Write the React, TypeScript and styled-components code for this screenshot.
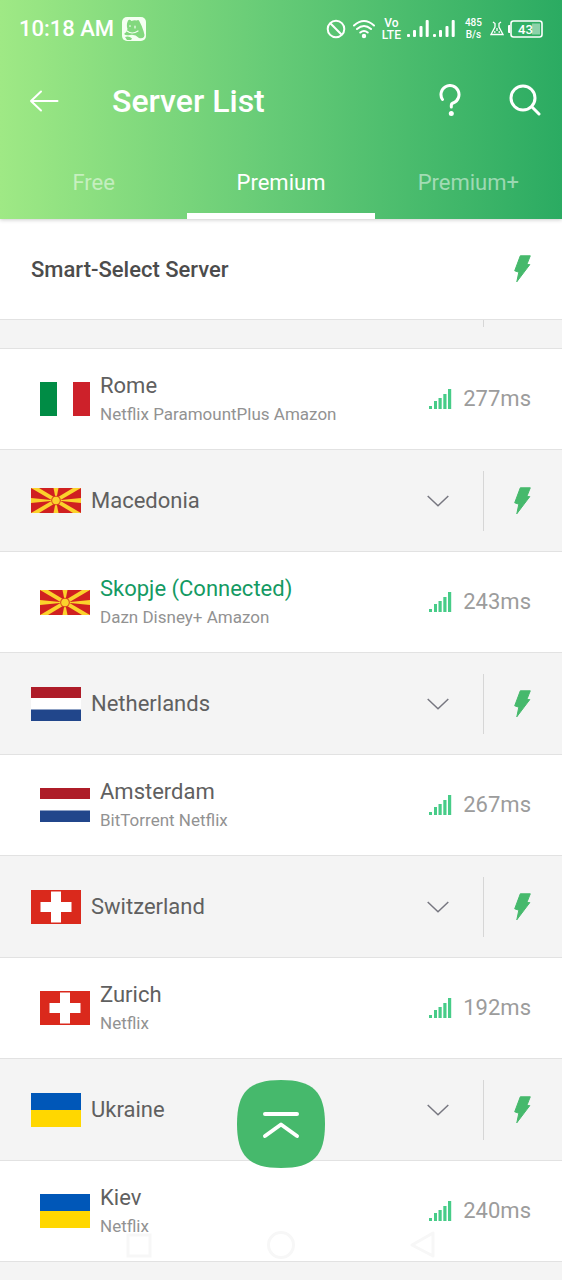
import React from "react";
import styled, { createGlobalStyle } from "styled-components";

const GlobalStyle = createGlobalStyle`
  * { box-sizing: border-box; }
  body { margin: 0; background: #f4f4f4; font-family: Roboto, "Liberation Sans", sans-serif; }
  button { border: 0; padding: 0; background: none; font: inherit; color: inherit; text-align: left; cursor: pointer; }
  svg { display: block; flex: none; }
`;

const Page = styled.div`
  min-height: 100vh;
  display: flex;
  flex-direction: column;
`;

const Header = styled.header`
  background: linear-gradient(90deg, #9fe985 0%, #64ca76 50%, #2bab62 100%);
  color: #fff;
  box-shadow: 0 1px 4px rgba(0, 0, 0, 0.2);
  position: relative;
`;

const StatusBar = styled.div`
  display: flex;
  align-items: center;
  justify-content: space-between;
  height: 57px;
  padding: 0 19px;
`;

const StatusGroup = styled.div<{ $gap: number }>`
  display: flex;
  align-items: center;
  gap: ${(p) => p.$gap}px;
`;

const Clock = styled.span`
  font-size: 22px;
  font-weight: 500;
  line-height: 28px;
`;

const Stacked = styled.span<{ $size: number }>`
  display: flex;
  flex-direction: column;
  align-items: center;
  font-size: ${(p) => p.$size}px;
  font-weight: 500;
  line-height: 12px;
`;

const TitleBar = styled.div`
  display: flex;
  align-items: center;
  height: 88px;
  padding: 0 21px 0 28px;
`;

const Title = styled.h1`
  flex: 1;
  margin: 0 0 0 52px;
  font-size: 32px;
  font-weight: 500;
  line-height: 40px;
`;

const IconButton = styled.button`
  display: flex;
  align-items: center;
  justify-content: center;
  width: 32px;
  height: 40px;
  & + & { margin-left: 42px; }
`;

const Tabs = styled.nav`
  display: flex;
  height: 74px;
`;

const Tab = styled.button<{ $active?: boolean }>`
  flex: 1;
  display: flex;
  align-items: center;
  justify-content: center;
  border-top: 8px solid transparent;
  border-bottom: 6px solid ${(p) => (p.$active ? "#fff" : "transparent")};
  font-size: 22px;
  line-height: 28px;
  color: ${(p) => (p.$active ? "#fff" : "rgba(255, 255, 255, 0.5)")};
`;

const SmartRow = styled.button`
  display: flex;
  align-items: center;
  justify-content: space-between;
  width: 100%;
  height: 101px;
  padding: 0 31px;
  background: #fff;
  border-bottom: 1px solid #e2e2e2;
  font-size: 22px;
  font-weight: 500;
  color: #4c4c4c;
`;

const ScrolledRow = styled.div`
  display: flex;
  justify-content: flex-end;
  height: 29px;
  padding-right: 78px;
  border-bottom: 1px solid #e2e2e2;
`;

const List = styled.ul`
  list-style: none;
  margin: 0;
  padding: 0;
`;

const CountryRow = styled.li`
  display: flex;
  align-items: center;
  height: 102px;
  padding-right: 31px;
  background: #f4f4f4;
  border-bottom: 1px solid #e2e2e2;
`;

const CountryToggle = styled.button`
  flex: 1;
  display: flex;
  align-items: center;
  gap: 10px;
  height: 100%;
  padding: 0 34px 0 31px;
`;

const CountryName = styled.span`
  flex: 1;
  font-size: 22px;
  line-height: 30px;
  color: #606060;
`;

const Divider = styled.span<{ $height: number }>`
  width: 1px;
  height: ${(p) => p.$height}px;
  background: #d6d6d6;
`;

const BoltButton = styled.button`
  padding-left: 30px;
`;

const CityItem = styled.li`
  height: 101px;
  background: #fff;
  border-bottom: 1px solid #e2e2e2;
`;

const CityButton = styled.button`
  display: flex;
  align-items: center;
  gap: 10px;
  width: 100%;
  height: 100%;
  padding: 0 31px 0 40px;
`;

const CityText = styled.span`
  flex: 1;
  display: flex;
  flex-direction: column;
`;

const CityName = styled.span<{ $connected?: boolean }>`
  font-size: 22px;
  line-height: 30px;
  color: ${(p) => (p.$connected ? "#149a63" : "#606060")};
`;

const Services = styled.span`
  font-size: 17px;
  line-height: 26px;
  color: #929292;
`;

const Ping = styled.span`
  font-size: 22px;
  line-height: 30px;
  color: #9c9c9c;
`;

const TopButton = styled.button`
  position: fixed;
  left: 50%;
  bottom: 112px;
  transform: translateX(-50%);
`;

const NavBar = styled.div`
  position: fixed;
  left: 0;
  right: 0;
  bottom: 20px;
  display: flex;
  justify-content: center;
  gap: 114px;
  pointer-events: none;
`;

type Country = "italy" | "macedonia" | "netherlands" | "switzerland" | "ukraine";

const sunRays = [
  "M0 0H8L27 11.500L23 13.500Z", "M50 0H42L23 11.500L27 13.500Z",
  "M0 25H8L27 13.500L23 11.500Z", "M50 25H42L23 13.500L27 11.500Z",
  "M22.500 0H27.500L25 12.500Z", "M22.500 25H27.500L25 12.500Z",
  "M0 10V15L25 12.500Z", "M50 10V15L25 12.500Z",
];

function Flag({ country }: { country: Country }) {
  if (country === "macedonia") {
    return (
      <svg width="50" height="25" viewBox="0 0 50 25" aria-hidden="true">
        <path fill="#d02020" d="M0 0H50V25H0Z" />
        {sunRays.map((d) => <path key={d} d={d} fill="#fbd22c" />)}
        <circle cx="25" cy="12.500" r="4.800" fill="#d8401f" />
        <circle cx="25" cy="12.500" r="3.800" fill="#fbd22c" />
      </svg>
    );
  }
  return (
    <svg width="50" height="34" viewBox="0 0 50 34" aria-hidden="true">
      {country === "italy" && (
        <>
          <path fill="#fff" d="M0 0H50V34H0Z" />
          <path fill="#008c45" d="M0 0H17V34H0Z" />
          <path fill="#cd212a" d="M33 0H50V34H33Z" />
        </>
      )}
      {country === "netherlands" && (
        <>
          <path fill="#fff" d="M0 0H50V34H0Z" />
          <path fill="#ae1c28" d="M0 0H50V11H0Z" />
          <path fill="#21468b" d="M0 22.500H50V34H0Z" />
        </>
      )}
      {country === "switzerland" && (
        <>
          <path fill="#da291c" d="M0 0H50V34H0Z" />
          <path fill="#fff" d="M20 1.500H30V12H40.500V22H30V32.500H20V22H9.500V12H20Z" />
        </>
      )}
      {country === "ukraine" && (
        <>
          <path fill="#0057b8" d="M0 0H50V17H0Z" />
          <path fill="#ffd700" d="M0 17H50V34H0Z" />
        </>
      )}
    </svg>
  );
}

const Bolt = () => (
  <svg width="17" height="28" viewBox="0 0 17 28" aria-hidden="true">
    <path
      d="M6.300 0.800H16.300L12.800 9.600H15.800L2.800 26.800L4.800 17.200L0.700 15.800Z"
      fill="#46b96c" stroke="#46b96c" strokeWidth="1" strokeLinejoin="round"
    />
  </svg>
);

const Chevron = () => (
  <svg width="22" height="12" viewBox="0 0 22 12" fill="none" stroke="#777780" strokeWidth="1.500" aria-hidden="true">
    <path d="M0.700 1L11 10.700L21.300 1" />
  </svg>
);

const Signal = () => (
  <svg width="24" height="20" viewBox="0 0 24 20" fill="#47cc88" aria-hidden="true">
    <path d="M0 17H3V20H0ZM5 12H8V20H5ZM9.500 9H12.700V20H9.500ZM14.300 5H17.500V20H14.300ZM19 0H22.200V20H19Z" />
  </svg>
);

const CellBars = () => (
  <svg width="22" height="18" viewBox="0 0 22 18" fill="#fff" aria-hidden="true">
    <rect x="0" y="14" width="3" height="3" rx="1" />
    <rect x="6" y="10" width="3" height="7" rx="1" />
    <rect x="12.500" y="6" width="3" height="11" rx="1" />
    <rect x="18.700" y="0" width="3" height="17" rx="1" />
  </svg>
);

const Mascot = () => (
  <svg width="24" height="24" viewBox="0 0 24 24" aria-hidden="true">
    <rect width="24" height="24" rx="5" fill="#f4fff1" />
    <path fill="#82d87e" d="M6 3.500Q7.500 2 9.500 4Q12 3 14.500 3.500Q17 2 17.500 4.500Q20 9 21.500 14Q23 18 22 20Q20 22 17 21Q13 17 8 18Q4 19 2 17Q5 15 5.500 12Q4 8 6 3.500Z" />
    <path fill="none" stroke="#f4fff1" strokeWidth="1.200" strokeLinecap="round" d="M5 14Q10 18 16 14M8 8.500V9.500M13 9V11" />
    <path fill="#82d87e" d="M3 20Q7 18.500 10 21.500L9 23H5Z" />
  </svg>
);

const rows: { country: Country; label?: string; city: string; services: string; ping: number; connected?: boolean }[] = [
  { country: "italy", city: "Rome", services: "Netflix ParamountPlus Amazon", ping: 277 },
  { country: "macedonia", label: "Macedonia", city: "Skopje (Connected)", services: "Dazn Disney+ Amazon", ping: 243, connected: true },
  { country: "netherlands", label: "Netherlands", city: "Amsterdam", services: "BitTorrent Netflix", ping: 267 },
  { country: "switzerland", label: "Switzerland", city: "Zurich", services: "Netflix", ping: 192 },
  { country: "ukraine", label: "Ukraine", city: "Kiev", services: "Netflix", ping: 240 },
];

export default function App() {
  return (
    <Page>
      <GlobalStyle />
      <Header>
        <StatusBar>
          <StatusGroup $gap={8}>
            <Clock>10:18 AM</Clock>
            <Mascot />
          </StatusGroup>
          <StatusGroup $gap={10}>
            <StatusGroup $gap={6}>
              <svg width="20" height="20" viewBox="0 0 20 20" fill="none" stroke="#fff" strokeWidth="2" aria-hidden="true">
                <circle cx="10" cy="10" r="8.300" />
                <path d="M4.300 4.300L15.700 15.700" />
              </svg>
              <svg width="24" height="20" viewBox="0 0 24 20" fill="none" stroke="#fff" strokeWidth="2" strokeLinecap="round" aria-hidden="true">
                <path d="M2 6.500Q12 -2.500 22 6.500M5 10Q12 4 19 10M8.300 13.500Q12 10.500 15.700 13.500" />
                <circle cx="12" cy="17" r="1.200" fill="#fff" />
              </svg>
              <Stacked $size={12}><span>Vo</span><span>LTE</span></Stacked>
              <StatusGroup $gap={4}>
                <CellBars />
                <CellBars />
              </StatusGroup>
            </StatusGroup>
            <StatusGroup $gap={8}>
              <Stacked $size={10}><span>485</span><span>B/s</span></Stacked>
              <StatusGroup $gap={4}>
                <svg width="14" height="15" viewBox="0 0 14 15" fill="none" stroke="#fff" strokeWidth="1.300" aria-hidden="true">
                  <path d="M3 1L5 2.500V6L1 13.500H13L9 6V2.500L11 1M7 7V10M4 11H5.500M8.500 11H10" />
                </svg>
                <svg width="35" height="18" viewBox="0 0 35 18" aria-hidden="true">
                  <path fill="#fff" d="M0 6Q0 5 1 5H2V13H1Q0 13 0 12Z" />
                  <rect x="3" y="1" width="31" height="16" rx="2.500" fill="none" stroke="#fff" strokeWidth="1.600" />
                  <rect x="24" y="3.500" width="8" height="11" fill="#fff" opacity="0.450" />
                  <text x="17.500" y="13.500" textAnchor="middle" fill="#fff" fontSize="13" fontWeight="500">43</text>
                </svg>
              </StatusGroup>
            </StatusGroup>
          </StatusGroup>
        </StatusBar>
        <TitleBar>
          <IconButton aria-label="Back">
            <svg width="30" height="24" viewBox="0 0 30 24" fill="none" stroke="#fff" strokeWidth="2" strokeLinecap="round" strokeLinejoin="round" aria-hidden="true">
              <path d="M28.500 12H2M12 2.500L2 12L12 21.500" />
            </svg>
          </IconButton>
          <Title>Server List</Title>
          <IconButton aria-label="Help">
            <svg width="24" height="34" viewBox="0 0 24 34" fill="none" stroke="#fff" strokeWidth="3" strokeLinecap="round" strokeLinejoin="round" aria-hidden="true">
              <path d="M3.500 15.500A9 9 0 1 1 14.500 18.800Q12.300 19.500 12.300 21.500V23" />
              <circle cx="12.300" cy="29.500" r="2.500" fill="#fff" stroke="none" />
            </svg>
          </IconButton>
          <IconButton aria-label="Search">
            <svg width="32" height="34" viewBox="0 0 32 34" fill="none" stroke="#fff" strokeWidth="3" strokeLinecap="round" aria-hidden="true">
              <circle cx="14" cy="14" r="12" />
              <path d="M22.800 22.800L30 30" />
            </svg>
          </IconButton>
        </TitleBar>
        <Tabs aria-label="Plans">
          <Tab>Free</Tab>
          <Tab $active aria-current="page">Premium</Tab>
          <Tab>Premium+</Tab>
        </Tabs>
      </Header>
      <SmartRow>
        <span>Smart-Select Server</span>
        <Bolt />
      </SmartRow>
      <ScrolledRow>
        <Divider $height={7} />
      </ScrolledRow>
      <List>
        {rows.map((r) => (
          <React.Fragment key={r.city}>
            {r.label && (
              <CountryRow>
                <CountryToggle>
                  <Flag country={r.country} />
                  <CountryName>{r.label}</CountryName>
                  <Chevron />
                </CountryToggle>
                <Divider $height={60} />
                <BoltButton aria-label={`Fastest server in ${r.label}`}>
                  <Bolt />
                </BoltButton>
              </CountryRow>
            )}
            <CityItem>
              <CityButton>
                <Flag country={r.country} />
                <CityText>
                  <CityName $connected={r.connected}>{r.city}</CityName>
                  <Services>{r.services}</Services>
                </CityText>
                <Signal />
                <Ping>{r.ping}ms</Ping>
              </CityButton>
            </CityItem>
          </React.Fragment>
        ))}
      </List>
      <TopButton aria-label="Back to top">
        <svg width="88" height="88" viewBox="0 0 88 88" aria-hidden="true">
          <path fill="#46b96c" d="M44 0C76 0 88 12 88 44S76 88 44 88S0 76 0 44S12 0 44 0Z" />
          <path fill="none" stroke="#fff" strokeWidth="4" strokeLinecap="round" strokeLinejoin="round" d="M28 34H60M28 56L44 44.500L60 56" />
        </svg>
      </TopButton>
      <NavBar>
        <svg width="28" height="30" viewBox="0 0 28 30" fill="none" stroke="#f7f7f7" strokeWidth="3" aria-hidden="true">
          <rect x="3" y="5" width="22" height="21" />
        </svg>
        <svg width="28" height="30" viewBox="0 0 28 30" fill="none" stroke="#f7f7f7" strokeWidth="3" aria-hidden="true">
          <circle cx="14" cy="15" r="12.500" />
        </svg>
        <svg width="28" height="30" viewBox="0 0 28 30" fill="none" stroke="#f7f7f7" strokeWidth="3" strokeLinejoin="round" aria-hidden="true">
          <path d="M24 3V26L3 15Z" />
        </svg>
      </NavBar>
    </Page>
  );
}
